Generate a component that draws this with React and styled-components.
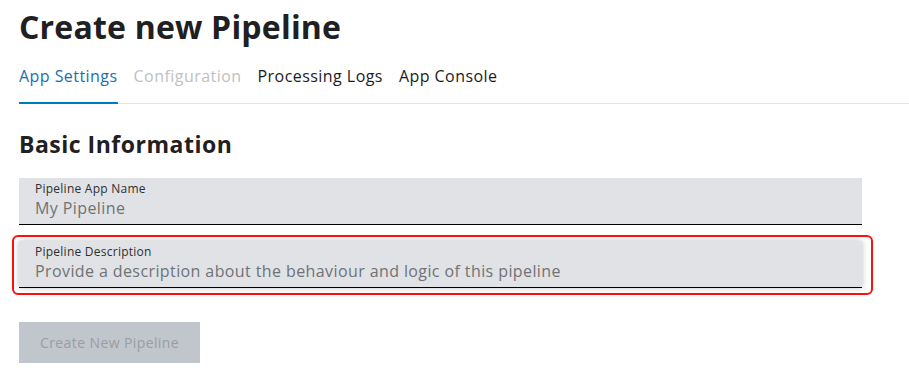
import React from "react";
import styled, {createGlobalStyle} from "styled-components";

const GlobalStyle = createGlobalStyle`
  body {
    margin: 0;
    background: #fff;
    font-family: "Open Sans", "Noto Sans", sans-serif;
    color: #1a1c1e;
  }
`;

const Page = styled.div`
  padding: 7px 0 0 19px;
`;

const Title = styled.h1`
  margin: 0;
  font-size: 32px;
  line-height: 40px;
  font-weight: 700;
  letter-spacing: 0.2px;
  color: #1f2022;
`;

const Tabs = styled.nav`
  display: flex;
  gap: 16px;
  margin-top: 18px;
  border-bottom: 1px solid #e3e4e6;
`;

const Tab = styled.div`
  padding-bottom: 15px;
  font-size: 16px;
  line-height: 22px;
  letter-spacing: 0.45px;
  color: ${p => p.active ? "#1a6fae" : p.disabled ? "#bfc0c2" : "#1a1c1e"};
  border-bottom: 2px solid ${p => p.active ? "#007bc0" : "transparent"};
  margin-bottom: -1px;
`;

const SectionTitle = styled.h2`
  margin: 25px 0 0;
  font-size: 23px;
  line-height: 30px;
  font-weight: 700;
  letter-spacing: 0.5px;
  color: #1f2022;
`;

const Form = styled.div`
  display: flex;
  flex-direction: column;
  max-width: 843px;
  margin-top: 19px;
`;

const Field = styled.div`
  display: flex;
  flex-direction: column;
  padding: 2px 16px 5px;
  background: #e0e2e5;
  border-bottom: 1px solid #000;
  box-shadow: ${p => p.raised ? "0 0 6px rgba(0, 0, 0, 0.25)" : "none"};
`;

const Label = styled.label`
  font-size: 12px;
  line-height: 17px;
  letter-spacing: 0.25px;
  color: #2e3033;
`;

const Value = styled.div`
  font-size: 16px;
  line-height: 22px;
  letter-spacing: 0.4px;
  color: #6f7376;
`;

const Highlight = styled.div`
  margin: 10px -11px 0 -7px;
  padding: 4px 9px 5px 5px;
  border: 2px solid #ff1010;
  border-radius: 6px;
`;

const Button = styled.button`
  align-self: flex-start;
  margin-top: 27px;
  width: 181px;
  height: 41px;
  border: none;
  background: #c1c5cc;
  color: #999ea4;
  font-family: inherit;
  font-size: 14px;
  letter-spacing: 0.4px;
`;

export default function App() {
    return (
        <Page>
            <GlobalStyle/>
            <Title>Create new Pipeline</Title>
            <Tabs>
                <Tab active>App Settings</Tab>
                <Tab disabled>Configuration</Tab>
                <Tab>Processing Logs</Tab>
                <Tab>App Console</Tab>
            </Tabs>
            <SectionTitle>Basic Information</SectionTitle>
            <Form>
                <Field>
                    <Label>Pipeline App Name</Label>
                    <Value>My Pipeline</Value>
                </Field>
                <Highlight>
                    <Field raised>
                        <Label>Pipeline Description</Label>
                        <Value>Provide a description about the behaviour and logic of this pipeline</Value>
                    </Field>
                </Highlight>
                <Button disabled>Create New Pipeline</Button>
            </Form>
        </Page>
    );
}
